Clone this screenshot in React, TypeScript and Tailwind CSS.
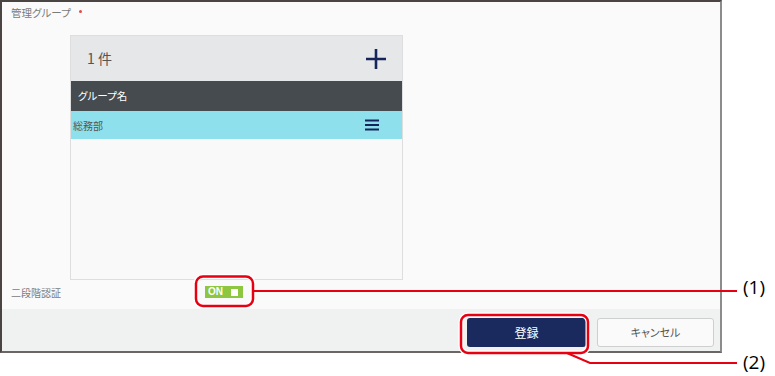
import React from "react";

const jp = { fontFamily: '"Noto Sans CJK JP", "Noto Sans", sans-serif' };

export default function App() {
  return (
    <div className="relative w-[775px] h-[376px] bg-white overflow-hidden [font-feature-settings:'palt']" style={jp}>
      <div className="w-[722px] h-[353px] flex flex-col border-t-2 border-l-2 border-b-2 border-r-2 border-t-[#4a4542] border-l-[#4a4542] border-b-[#6b6663] border-r-[#8c8c8c] bg-[#fafafa]">
        <div className="flex-1 flex flex-col pl-[9px] pt-[3px]">
          <div className="flex items-center h-[16px] text-[10.5px] text-[#7a7a7a]">
            <span>管理グループ</span>
            <span className="ml-[8px] w-[3px] h-[3px] rounded-full bg-[#e34a4a] -mt-[3px]" />
          </div>
          <div className="ml-[59px] mt-[14px] w-[333px] h-[245px] border border-[#dedede] bg-[#f9f9f9] flex flex-col">
            <div className="h-[45px] bg-[#e6e7e8] flex items-center justify-between pl-[16px] pr-[15px]">
              <span className="text-[14px] text-[#555] [font-feature-settings:normal]">1 件</span>
              <svg width="22" height="22" viewBox="0 0 22 22">
                <path d="M11 1V21M1 11H21" stroke="#15245a" strokeWidth="2.6" />
              </svg>
            </div>
            <div className="h-[30px] bg-[#454b4e] flex items-center pl-[7px] text-[10.5px] text-white">グループ名</div>
            <div className="h-[28px] bg-[#8ee0ec] flex items-center justify-between pl-[2px] pr-[22px] text-[10px] text-[#555]">
              <span>総務部</span>
              <svg width="16" height="12" viewBox="0 0 16 12">
                <path d="M1 1.5H15M1 6H15M1 10.5H15" stroke="#15245a" strokeWidth="2" />
              </svg>
            </div>
          </div>
          <div className="flex items-center h-[24px]">
            <span className="w-[194px] text-[10px] text-[#7a7a7a]">二段階認証</span>
            <div className="w-[38px] h-[12px] bg-[#8dc63f] flex items-center justify-between pl-[3px] pr-[5px]">
              <span className="text-[10px] font-bold text-white leading-none" style={{ fontFamily: '"Liberation Sans", sans-serif' }}>ON</span>
              <span className="w-[7px] h-[7px] bg-white" />
            </div>
          </div>
        </div>
        <div className="h-[42px] bg-[#f0f1f1] flex justify-end items-start pt-[9px] pr-[6px] gap-[11px]">
          <button className="w-[119px] h-[29px] rounded-[3px] bg-[#1a2a5e] text-white text-[12px]">登録</button>
          <button className="w-[117px] h-[29px] rounded-[3px] bg-[#fafafa] border border-[#cfcfcf] text-[#555] text-[11px]">キャンセル</button>
        </div>
      </div>

      <svg className="absolute left-0 top-0" width="775" height="376" viewBox="0 0 775 376">
        <rect x="196" y="276.5" width="57" height="29.5" rx="7" fill="none" stroke="white" strokeWidth="5" />
        <rect x="196" y="276.5" width="57" height="29.5" rx="7" fill="none" stroke="#e60012" strokeWidth="2.5" />
        <path d="M253 291H737" stroke="#e60012" strokeWidth="2" />
        <rect x="461" y="315" width="127" height="38" rx="7" fill="none" stroke="white" strokeWidth="5" />
        <rect x="461" y="315" width="127" height="38" rx="7" fill="none" stroke="#e60012" strokeWidth="2.5" />
        <path d="M567 353L590 363H737" stroke="#e60012" strokeWidth="2" fill="none" />
      </svg>
      <span className="absolute left-[743px] top-[275px] text-[19px] leading-[24px] text-black" style={{ fontFamily: '"Open Sans", sans-serif' }}>(1)</span>
      <span className="absolute left-[743px] top-[350px] text-[19px] leading-[24px] text-black" style={{ fontFamily: '"Open Sans", sans-serif' }}>(2)</span>
    </div>
  );
}
